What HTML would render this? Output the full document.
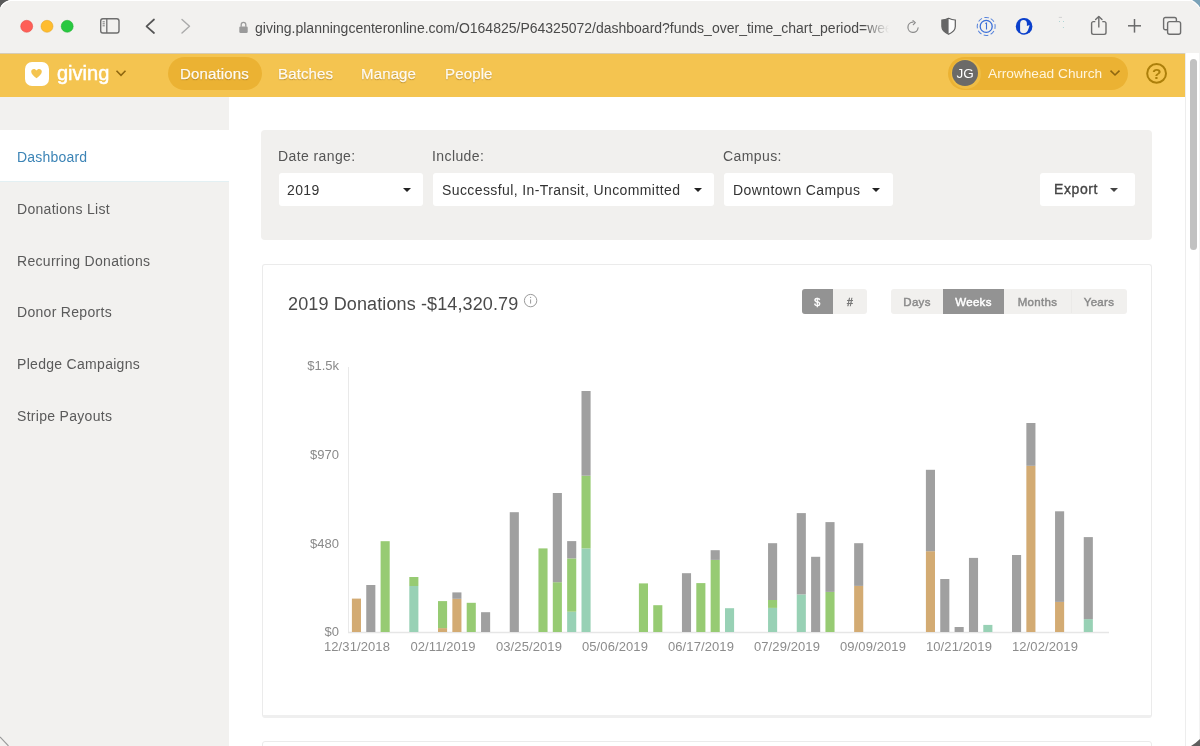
<!DOCTYPE html>
<html><head><meta charset="utf-8">
<style>
*{margin:0;padding:0;box-sizing:border-box}
html,body{width:1200px;height:746px;overflow:hidden;background:#fff;font-family:"Liberation Sans",sans-serif}
.a{position:absolute;white-space:nowrap;will-change:transform}
#chrome{position:absolute;left:0;top:0;width:1200px;height:53px;background:#f2f1ef;border-top:1px solid #fff}
#hdr{position:absolute;left:0;top:53px;width:1185px;height:44px;background:#f4c450;border-top:1px solid #d6ccb6}
#side{position:absolute;left:0;top:97px;width:229px;height:649px;background:#f2f1ef}
#scroll{position:absolute;left:1185px;top:53px;width:15px;height:693px;background:#fff;border-left:1.5px solid #ededed;border-right:1px solid #f3f3f3}
#thumb{position:absolute;left:1190px;top:59px;width:7px;height:190.5px;background:#c1c1c1;border-radius:3.5px}
.nav{font-size:15px;color:#fffaf0;text-shadow:0 1px 1px rgba(120,80,0,.5);line-height:18px;-webkit-text-stroke:.25px #fffaf0;letter-spacing:.15px}
.side{font-size:14px;color:#5a5a5a;line-height:16px;left:17px;letter-spacing:.3px}
.lbl{font-size:14px;color:#555;line-height:16px;letter-spacing:.4px}
.sel{position:absolute;background:#fff;border-radius:3px;height:33px;top:173px}
.seltxt{font-size:14px;color:#333;line-height:16px;letter-spacing:.4px}
.caret{position:absolute;width:0;height:0;border-left:4px solid transparent;border-right:4px solid transparent;border-top:4px solid #222}
.ylab{font-size:13px;color:#8a8a8a;line-height:15px;text-align:right;width:60px;left:279px}
.xlab{font-size:13px;color:#8c8c8c;line-height:15px;text-align:center;width:90px;letter-spacing:.1px}
.seg{position:absolute;height:25px;top:289.5px;font-size:11.5px;color:#8a8a8a;line-height:25px;text-align:center;-webkit-text-stroke:.45px currentColor;letter-spacing:.3px}
</style></head><body>

<!-- browser chrome -->
<div id="chrome"></div>
<svg class="a" style="left:0;top:0" width="1200" height="53" viewBox="0 0 1200 53">
  <circle cx="26.7" cy="26.3" r="6" fill="#fe5f57" stroke="#e0443e" stroke-width=".5"/>
  <circle cx="47" cy="26.3" r="6" fill="#febc2e" stroke="#dea123" stroke-width=".5"/>
  <circle cx="67.2" cy="26.3" r="6" fill="#28c840" stroke="#1dad2b" stroke-width=".5"/>
  <!-- sidebar icon -->
  <rect x="100.7" y="18.8" width="18.3" height="14.2" rx="2.2" fill="none" stroke="#6e6e6e" stroke-width="1.4"/>
  <line x1="106.8" y1="18.8" x2="106.8" y2="33" stroke="#6e6e6e" stroke-width="1.3"/>
  <line x1="102.6" y1="21.8" x2="104.8" y2="21.8" stroke="#6e6e6e" stroke-width=".9"/>
  <line x1="102.6" y1="23.8" x2="104.8" y2="23.8" stroke="#6e6e6e" stroke-width=".9"/>
  <line x1="102.6" y1="25.8" x2="104.8" y2="25.8" stroke="#6e6e6e" stroke-width=".9"/>
  <!-- back / fwd -->
  <polyline points="154,19.5 146.5,26.3 154,33" fill="none" stroke="#555" stroke-width="1.7" stroke-linecap="round" stroke-linejoin="round"/>
  <polyline points="182,19.5 189.5,26.3 182,33" fill="none" stroke="#aaa" stroke-width="1.4" stroke-linecap="round" stroke-linejoin="round"/>
  <!-- lock -->
  <rect x="239.3" y="26.5" width="8.4" height="6.5" rx="1.2" fill="#9a9a9a"/>
  <path d="M241.2 26.8 V24.6 a2.3 2.3 0 0 1 4.6 0 V26.8" fill="none" stroke="#9a9a9a" stroke-width="1.3"/>
  <!-- reload -->
  <path d="M912.9 22.2 A5.1 5.1 0 1 0 918.1 27.8" fill="none" stroke="#8a8a8a" stroke-width="1.2" stroke-linecap="round"/>
  <polyline points="913,20.6 915.3,22.6 913.3,24.6" fill="none" stroke="#8a8a8a" stroke-width="1.2" stroke-linecap="round" stroke-linejoin="round"/>
  <!-- shield -->
  <path d="M948.6 18.3 C951.2 19.5 953.4 19.9 955.3 20 V26.6 C955.3 30.4 952.3 32.7 948.6 34.3 C944.9 32.7 941.9 30.4 941.9 26.6 V20 C943.8 19.9 946 19.5 948.6 18.3 Z" fill="#fbfbfb" stroke="#5e5e5e" stroke-width="1.2"/>
  <path d="M948.6 18.3 C946 19.5 943.8 19.9 941.9 20 V26.6 C941.9 30.4 944.9 32.7 948.6 34.3 Z" fill="#666"/>
  <!-- 1password -->
  <circle cx="986.2" cy="26.4" r="9" fill="none" stroke="#5582dc" stroke-width="1" stroke-dasharray="4.6 2.5" transform="rotate(-60 986.2 26.4)"/>
  <circle cx="986.2" cy="26.4" r="6" fill="none" stroke="#3b6fd8" stroke-width="1.3"/>
  <path d="M985.3 23.6 L986.5 23.1 V29.4" fill="none" stroke="#3b6fd8" stroke-width="1.1"/>
  <!-- blue hand -->
  <circle cx="1024.1" cy="26.4" r="8.3" fill="#0b40cc"/>
  <path d="M1020.1 30.8 V23.6 Q1020.1 20.1 1023.5 20.1 Q1026.9 20.1 1026.9 23.6 V26 L1029.5 25.1 Q1029.3 27 1028.3 29.3 Q1027.2 33.2 1023.5 33.2 Q1020.1 33.2 1020.1 30.8 Z" fill="#f2f1ef"/>
  <!-- faint icon -->
  <line x1="1058.8" y1="17.4" x2="1062" y2="17.4" stroke="#ccc" stroke-width=".8"/>
  <circle cx="1059.5" cy="21.4" r=".5" fill="#9cc"/><circle cx="1063.5" cy="21.4" r=".5" fill="#9cc"/><circle cx="1063.4" cy="27.4" r=".5" fill="#9cc"/>
  <!-- share -->
  <path d="M1095.3 21.6 H1093.4 A1.8 1.8 0 0 0 1091.6 23.4 V32.6 A1.8 1.8 0 0 0 1093.4 34.4 H1104.2 A1.8 1.8 0 0 0 1106 32.6 V23.4 A1.8 1.8 0 0 0 1104.2 21.6 H1102.3" fill="none" stroke="#6e6e6e" stroke-width="1.4"/>
  <line x1="1098.8" y1="16.6" x2="1098.8" y2="27.6" stroke="#6e6e6e" stroke-width="1.4"/>
  <polyline points="1095.6,19.6 1098.8,16.4 1102,19.6" fill="none" stroke="#6e6e6e" stroke-width="1.4" stroke-linecap="round" stroke-linejoin="round"/>
  <!-- plus -->
  <line x1="1134.5" y1="19" x2="1134.5" y2="32.6" stroke="#6a6a6a" stroke-width="1.5"/>
  <line x1="1128" y1="25.8" x2="1141" y2="25.8" stroke="#6a6a6a" stroke-width="1.5"/>
  <!-- tabs -->
  <path d="M1167.6 29.8 H1165.4 A1.8 1.8 0 0 1 1163.6 28 V19.3 A1.8 1.8 0 0 1 1165.4 17.5 H1174.6 A1.8 1.8 0 0 1 1176.4 19.3 V21.6" fill="none" stroke="#6e6e6e" stroke-width="1.4"/>
  <rect x="1167.6" y="21.6" width="13" height="12.6" rx="2" fill="none" stroke="#6e6e6e" stroke-width="1.4"/>
</svg>
<div class="a" style="left:255px;top:18.5px;width:634px;overflow:hidden;font-size:14px;line-height:18px;color:#4a4a4a;-webkit-mask-image:linear-gradient(to right,#000 608px,transparent 634px)">giving.planningcenteronline.com/O164825/P64325072/dashboard?funds_over_time_chart_period=weeks</div>

<!-- app header -->
<div id="hdr"></div>
<div class="a" style="left:24.5px;top:61.8px;width:23.5px;height:23.5px;background:#fff;border-radius:7px"></div>
<svg class="a" style="left:30px;top:67px" width="13" height="13" viewBox="0 0 13 13"><path d="M6.5 11.2 C3.2 8.8 1.2 6.9 1.2 4.6 C1.2 2.9 2.4 1.9 3.8 1.9 C5 1.9 5.9 2.6 6.5 3.5 C7.1 2.6 8 1.9 9.2 1.9 C10.6 1.9 11.8 2.9 11.8 4.6 C11.8 6.9 9.8 8.8 6.5 11.2 Z" fill="#f4c450"/></svg>
<div class="a" style="left:57px;top:61px;font-size:20px;line-height:24px;color:#fff;-webkit-text-stroke:.5px #fff">giving</div>
<svg class="a" style="left:114px;top:67px" width="14" height="12"><polyline points="2.5,3.8 7,8.3 11.5,3.8" fill="none" stroke="#8f6710" stroke-width="1.6"/></svg>

<div class="a" style="left:167.5px;top:57px;width:94px;height:33px;background:#ebb233;border-radius:17px"></div>
<div class="a nav" style="left:180px;top:65px">Donations</div>
<div class="a nav" style="left:278px;top:65px">Batches</div>
<div class="a nav" style="left:361px;top:65px">Manage</div>
<div class="a nav" style="left:444.5px;top:65px">People</div>

<div class="a" style="left:948px;top:57px;width:180px;height:33px;background:#ebb233;border-radius:17px"></div>
<div class="a" style="left:950.5px;top:58.5px;width:30px;height:30px;background:#efbd45;border-radius:50%"></div>
<div class="a" style="left:952.3px;top:60.3px;width:26.4px;height:26.4px;background:#6b6a68;border-radius:50%"></div>
<div class="a" style="left:952.3px;top:66px;width:26.4px;text-align:center;font-size:13.5px;line-height:16px;color:#fff">JG</div>
<div class="a" style="left:987.5px;top:66px;font-size:13.7px;line-height:16px;color:#fff5dc">Arrowhead Church</div>
<svg class="a" style="left:1108px;top:67px" width="14" height="12"><polyline points="2.5,3.6 7,8 11.5,3.6" fill="none" stroke="#8f6710" stroke-width="1.6"/></svg>
<svg class="a" style="left:1143px;top:60px" width="27" height="27"><circle cx="13.6" cy="13.4" r="9.4" fill="none" stroke="#ac7f0a" stroke-width="2"/><text x="13.8" y="18.9" text-anchor="middle" font-family="Liberation Sans" font-size="15.5" font-weight="bold" fill="#ac7f0a">?</text></svg>

<!-- sidebar -->
<div id="side"></div>
<div class="a" style="left:0;top:130px;width:229px;height:52px;background:#fff;border-bottom:1px solid #e3f0f3"></div>
<div class="a side" style="top:149px;color:#3c84b6;letter-spacing:.2px">Dashboard</div>
<div class="a side" style="top:201.4px">Donations List</div>
<div class="a side" style="top:253.3px">Recurring Donations</div>
<div class="a side" style="top:304px">Donor Reports</div>
<div class="a side" style="top:356px">Pledge Campaigns</div>
<div class="a side" style="top:408px">Stripe Payouts</div>

<!-- scrollbar -->
<div id="scroll"></div>
<div id="thumb"></div>

<!-- filter panel -->
<div class="a" style="left:261px;top:130px;width:891px;height:110px;background:#f1f0ee;border-radius:4px"></div>
<div class="a lbl" style="left:278px;top:148px">Date range:</div>
<div class="a lbl" style="left:432px;top:148px">Include:</div>
<div class="a lbl" style="left:723px;top:148px">Campus:</div>
<div class="sel" style="left:279px;width:144px"></div>
<div class="a seltxt" style="left:287px;top:182px">2019</div>
<div class="caret" style="left:402.5px;top:188px"></div>
<div class="sel" style="left:433px;width:281px"></div>
<div class="a seltxt" style="left:441.5px;top:182px">Successful, In-Transit, Uncommitted</div>
<div class="caret" style="left:693.5px;top:188px"></div>
<div class="sel" style="left:724px;width:169px"></div>
<div class="a seltxt" style="left:732.5px;top:182px">Downtown Campus</div>
<div class="caret" style="left:872px;top:188px"></div>
<div class="sel" style="left:1040px;width:95px"></div>
<div class="a seltxt" style="left:1054px;top:181px;color:#444;-webkit-text-stroke:.35px #444;letter-spacing:.6px">Export</div>
<div class="caret" style="left:1110px;top:188px;border-top-color:#444"></div>

<!-- card -->
<div class="a" style="left:262px;top:264px;width:890px;height:454px;border:1px solid #ebebeb;border-bottom:3px solid #efefef;border-radius:3px;background:#fff"></div>
<div class="a" style="left:287.5px;top:294px;font-size:18px;line-height:21px;color:#4a4a4a;letter-spacing:.12px">2019 Donations -$14,320.79</div>
<svg class="a" style="left:522px;top:292px" width="18" height="18"><circle cx="8.6" cy="8.6" r="6.2" fill="none" stroke="#9a9a9a" stroke-width="1"/><line x1="8.6" y1="7.4" x2="8.6" y2="11.6" stroke="#9a9a9a" stroke-width="1"/><circle cx="8.6" cy="5.4" r=".6" fill="#9a9a9a"/></svg>

<div class="a" style="left:802px;top:289px;width:65px;height:25px;background:#f1f0ee;border-radius:3px;overflow:hidden">
  <div class="a" style="left:0;top:0;width:31px;height:25px;background:#939393"></div>
</div>
<div class="seg" style="left:802px;width:31px;color:#fff;font-size:10.8px">$</div>
<div class="seg" style="left:833px;width:34px;color:#777;font-size:10.5px">#</div>

<div class="a" style="left:891px;top:289px;width:236px;height:25px;background:#f1f0ee;border-radius:3px;overflow:hidden">
  <div class="a" style="left:52px;top:0;width:61px;height:25px;background:#939393"></div>
</div>
<div class="a" style="left:1071px;top:290px;width:1px;height:23px;background:#ebeae8"></div>
<div class="seg" style="left:891px;width:52px">Days</div>
<div class="seg" style="left:943px;width:61px;color:#fff">Weeks</div>
<div class="seg" style="left:1004px;width:67px">Months</div>
<div class="seg" style="left:1071px;width:56px">Years</div>

<!-- chart -->
<svg class="a" style="left:0;top:0" width="1200" height="746" viewBox="0 0 1200 746">
<line x1="348.5" y1="367" x2="348.5" y2="632" stroke="#e9e9e9" stroke-width="1"/>
<line x1="348" y1="632.5" x2="1109" y2="632.5" stroke="#e6e6e6" stroke-width="1.5"/>
<rect x="351.90" y="598.60" width="9.1" height="33.40" fill="#d3ab73"/>
<rect x="366.25" y="585.00" width="9.1" height="47.00" fill="#a0a0a0"/>
<rect x="380.60" y="541.20" width="9.1" height="90.80" fill="#97cb73"/>
<rect x="409.30" y="586.00" width="9.1" height="46.00" fill="#98d1b5"/>
<rect x="409.30" y="577.00" width="9.1" height="9.00" fill="#97cb73"/>
<rect x="438.00" y="628.10" width="9.1" height="3.90" fill="#d3ab73"/>
<rect x="438.00" y="601.10" width="9.1" height="27.00" fill="#97cb73"/>
<rect x="452.35" y="598.80" width="9.1" height="33.20" fill="#d3ab73"/>
<rect x="452.35" y="592.40" width="9.1" height="6.40" fill="#a0a0a0"/>
<rect x="466.70" y="602.80" width="9.1" height="29.20" fill="#97cb73"/>
<rect x="481.05" y="612.20" width="9.1" height="19.80" fill="#a0a0a0"/>
<rect x="509.75" y="512.20" width="9.1" height="119.80" fill="#a0a0a0"/>
<rect x="538.45" y="548.40" width="9.1" height="83.60" fill="#97cb73"/>
<rect x="552.80" y="582.20" width="9.1" height="49.80" fill="#97cb73"/>
<rect x="552.80" y="493.00" width="9.1" height="89.20" fill="#a0a0a0"/>
<rect x="567.15" y="611.70" width="9.1" height="20.30" fill="#98d1b5"/>
<rect x="567.15" y="558.40" width="9.1" height="53.30" fill="#97cb73"/>
<rect x="567.15" y="541.10" width="9.1" height="17.30" fill="#a0a0a0"/>
<rect x="581.50" y="548.40" width="9.1" height="83.60" fill="#98d1b5"/>
<rect x="581.50" y="475.70" width="9.1" height="72.70" fill="#97cb73"/>
<rect x="581.50" y="391.00" width="9.1" height="84.70" fill="#a0a0a0"/>
<rect x="638.90" y="583.40" width="9.1" height="48.60" fill="#97cb73"/>
<rect x="653.25" y="605.20" width="9.1" height="26.80" fill="#97cb73"/>
<rect x="681.95" y="573.20" width="9.1" height="58.80" fill="#a0a0a0"/>
<rect x="696.30" y="583.10" width="9.1" height="48.90" fill="#97cb73"/>
<rect x="710.65" y="559.90" width="9.1" height="72.10" fill="#97cb73"/>
<rect x="710.65" y="550.20" width="9.1" height="9.70" fill="#a0a0a0"/>
<rect x="725.00" y="608.20" width="9.1" height="23.80" fill="#98d1b5"/>
<rect x="768.05" y="607.90" width="9.1" height="24.10" fill="#98d1b5"/>
<rect x="768.05" y="600.00" width="9.1" height="7.90" fill="#97cb73"/>
<rect x="768.05" y="543.20" width="9.1" height="56.80" fill="#a0a0a0"/>
<rect x="796.75" y="594.40" width="9.1" height="37.60" fill="#98d1b5"/>
<rect x="796.75" y="513.10" width="9.1" height="81.30" fill="#a0a0a0"/>
<rect x="811.10" y="556.80" width="9.1" height="75.20" fill="#a0a0a0"/>
<rect x="825.45" y="591.90" width="9.1" height="40.10" fill="#97cb73"/>
<rect x="825.45" y="522.10" width="9.1" height="69.80" fill="#a0a0a0"/>
<rect x="854.15" y="585.90" width="9.1" height="46.10" fill="#d3ab73"/>
<rect x="854.15" y="543.20" width="9.1" height="42.70" fill="#a0a0a0"/>
<rect x="925.90" y="551.20" width="9.1" height="80.80" fill="#d3ab73"/>
<rect x="925.90" y="469.80" width="9.1" height="81.40" fill="#a0a0a0"/>
<rect x="940.25" y="579.00" width="9.1" height="53.00" fill="#a0a0a0"/>
<rect x="954.60" y="627.00" width="9.1" height="5.00" fill="#a0a0a0"/>
<rect x="968.95" y="557.90" width="9.1" height="74.10" fill="#a0a0a0"/>
<rect x="983.30" y="624.90" width="9.1" height="7.10" fill="#98d1b5"/>
<rect x="1012.00" y="555.00" width="9.1" height="77.00" fill="#a0a0a0"/>
<rect x="1026.35" y="465.80" width="9.1" height="166.20" fill="#d3ab73"/>
<rect x="1026.35" y="423.00" width="9.1" height="42.80" fill="#a0a0a0"/>
<rect x="1055.05" y="601.90" width="9.1" height="30.10" fill="#d3ab73"/>
<rect x="1055.05" y="511.30" width="9.1" height="90.60" fill="#a0a0a0"/>
<rect x="1083.75" y="619.10" width="9.1" height="12.90" fill="#98d1b5"/>
<rect x="1083.75" y="537.10" width="9.1" height="82.00" fill="#a0a0a0"/>
</svg>
<div class="a ylab" style="top:358px">$1.5k</div>
<div class="a ylab" style="top:447px">$970</div>
<div class="a ylab" style="top:536px">$480</div>
<div class="a ylab" style="top:624px">$0</div>
<div class="a xlab" style="left:311.5px;top:639px">12/31/2018</div>
<div class="a xlab" style="left:397.6px;top:639px">02/11/2019</div>
<div class="a xlab" style="left:483.7px;top:639px">03/25/2019</div>
<div class="a xlab" style="left:569.8px;top:639px">05/06/2019</div>
<div class="a xlab" style="left:655.9px;top:639px">06/17/2019</div>
<div class="a xlab" style="left:742px;top:639px">07/29/2019</div>
<div class="a xlab" style="left:828.1px;top:639px">09/09/2019</div>
<div class="a xlab" style="left:914.2px;top:639px">10/21/2019</div>
<div class="a xlab" style="left:1000.3px;top:639px">12/02/2019</div>

<!-- next card -->
<div class="a" style="left:262px;top:741px;width:890px;height:20px;border:1px solid #ebebeb;border-radius:3px;background:#fff"></div>

<!-- corners -->
<svg class="a" style="left:0;top:0" width="1200" height="746" viewBox="0 0 1200 746">
  <path d="M0 0 H9.5 Q5.5 1.6 3.2 3.6 Q1.2 5.4 .6 7.2 H0 Z" fill="#5a5a5a"/>
  <path d="M9.8 .6 Q5.6 2 3.4 4 Q1.4 5.8 .8 7.6" fill="none" stroke="#fff" stroke-width="1.2"/>
  <path d="M1192 0 H1200 V7.5 Q1197.5 3 1192 0 Z" fill="#7aa2b8"/>
  <path d="M1191.8 .9 Q1197 3.6 1199.6 7.8" fill="none" stroke="#fff" stroke-width="1"/>
  <path d="M1191 746 Q1196 743 1200 739 V746 Z" fill="#5e5e5e"/>
  <path d="M0 737 L8.5 746" fill="none" stroke="#9a9a9a" stroke-width="1.1"/>
</svg>
</body></html>
